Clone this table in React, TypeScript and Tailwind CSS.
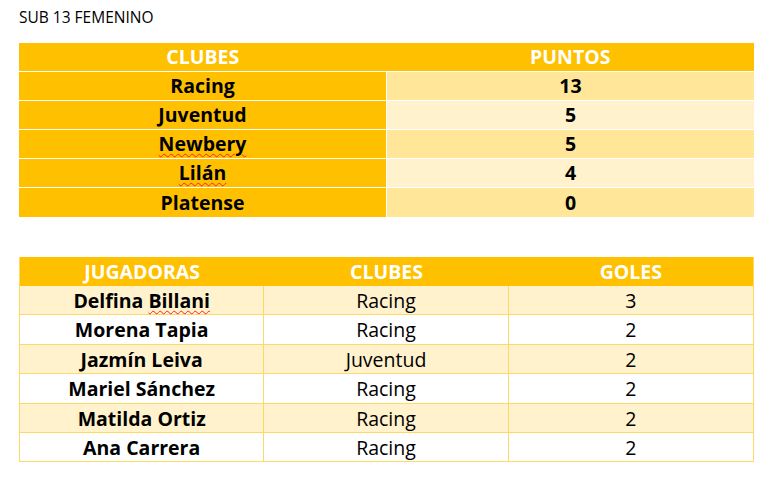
const standings = [
  { club: 'Racing', pts: '13', typo: false },
  { club: 'Juventud', pts: '5', typo: false },
  { club: 'Newbery', pts: '5', typo: true },
  { club: 'Lilán', pts: '4', typo: true },
  { club: 'Platense', pts: '0', typo: false },
]

const scorers = [
  { first: 'Delfina', last: 'Billani', typo: true, club: 'Racing', goals: '3' },
  { first: 'Morena', last: 'Tapia', typo: false, club: 'Racing', goals: '2' },
  { first: 'Jazmín', last: 'Leiva', typo: false, club: 'Juventud', goals: '2' },
  { first: 'Mariel', last: 'Sánchez', typo: false, club: 'Racing', goals: '2' },
  { first: 'Matilda', last: 'Ortiz', typo: false, club: 'Racing', goals: '2' },
  { first: 'Ana', last: 'Carrera', typo: false, club: 'Racing', goals: '2' },
]

const squiggle = 'underline decoration-wavy decoration-[#ff2020] decoration-1 underline-offset-[2px]'

export default function App() {
  return (
    <div className="w-[772px] h-[481px] bg-white text-black font-['Open_Sans','Noto_Sans',sans-serif] pl-[19px] pr-[18px]">
      <div className="pt-[7px] text-[15.5px] leading-[20px]">SUB 13 FEMENINO</div>

      {/* tabla de posiciones */}
      <div className="mt-[16px] text-[19.5px] font-bold">
        <div className="flex h-[29px] bg-[#ffc000] text-white border-b border-white">
          <div className="flex-1 flex items-center justify-center">CLUBES</div>
          <div className="flex-1 flex items-center justify-center">PUNTOS</div>
        </div>
        {standings.map((s, i) => (
          <div key={s.club} className={`flex h-[29px] ${i < standings.length - 1 ? 'border-b border-white' : ''}`}>
            <div className="flex-1 flex items-center justify-center bg-[#ffc000] border-r border-white">
              <span className={s.typo ? squiggle : ''}>{s.club}</span>
            </div>
            <div className={`flex-1 flex items-center justify-center ${i % 2 === 0 ? 'bg-[#ffe699]' : 'bg-[#fff2cc]'}`}>
              {s.pts}
            </div>
          </div>
        ))}
      </div>

      {/* goleadoras */}
      <div className="mt-[40px] text-[19.5px] border-x border-[#ffd966]">
        <div className="grid grid-cols-3 h-[29px] bg-[#ffc000] text-white font-bold">
          <div className="flex items-center justify-center">JUGADORAS</div>
          <div className="flex items-center justify-center">CLUBES</div>
          <div className="flex items-center justify-center">GOLES</div>
        </div>
        {scorers.map((p, i) => (
          <div
            key={p.first}
            className={`grid grid-cols-3 h-[29.4px] border-b border-[#ffd966] ${i % 2 === 0 ? 'bg-[#fff2cc]' : 'bg-white'}`}
          >
            <div className="flex items-center justify-center font-bold border-r border-[#ffd966]">
              {p.first}&nbsp;<span className={p.typo ? squiggle : ''}>{p.last}</span>
            </div>
            <div className="flex items-center justify-center border-r border-[#ffd966]">{p.club}</div>
            <div className="flex items-center justify-center">{p.goals}</div>
          </div>
        ))}
      </div>
    </div>
  )
}
